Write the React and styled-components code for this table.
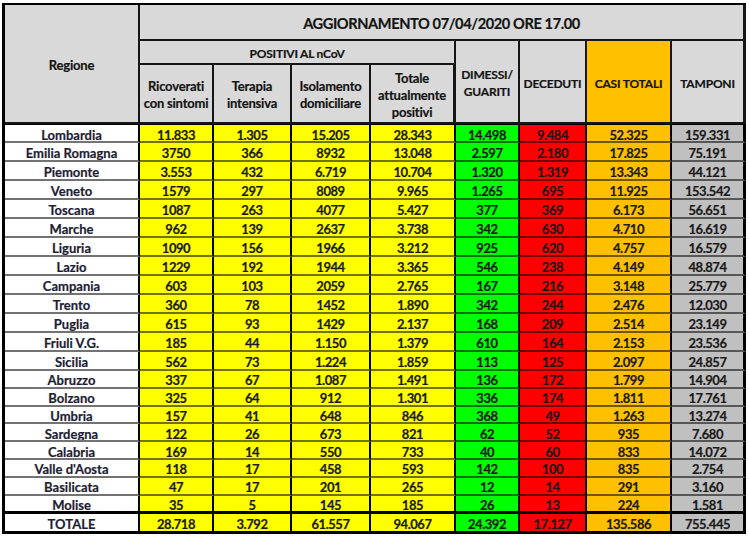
import React from 'react';
import styled, { createGlobalStyle } from 'styled-components';

const GlobalStyle = createGlobalStyle`
    html, body {
        margin: 0;
        padding: 0;
        background: #fff;
    }
    body {
        font-family: "Lato", "Open Sans", sans-serif;
    }
`

const colors = {
    head: '#d9d9d9',
    white: '#ffffff',
    yellow: '#ffff00',
    green: '#00ff00',
    red: '#ff0000',
    orange: '#ffc000',
    gray: '#c0c0c0',
}

const columnBg = ['white', 'yellow', 'yellow', 'yellow', 'yellow', 'green', 'red', 'orange', 'gray']
const columnWidths = [135, 74, 78, 79, 85, 64, 67, 85, 74]

const regions = [
    ['Lombardia', '11.833', '1.305', '15.205', '28.343', '14.498', '9.484', '52.325', '159.331'],
    ['Emilia Romagna', '3750', '366', '8932', '13.048', '2.597', '2.180', '17.825', '75.191'],
    ['Piemonte', '3.553', '432', '6.719', '10.704', '1.320', '1.319', '13.343', '44.121'],
    ['Veneto', '1579', '297', '8089', '9.965', '1.265', '695', '11.925', '153.542'],
    ['Toscana', '1087', '263', '4077', '5.427', '377', '369', '6.173', '56.651'],
    ['Marche', '962', '139', '2637', '3.738', '342', '630', '4.710', '16.619'],
    ['Liguria', '1090', '156', '1966', '3.212', '925', '620', '4.757', '16.579'],
    ['Lazio', '1229', '192', '1944', '3.365', '546', '238', '4.149', '48.874'],
    ['Campania', '603', '103', '2059', '2.765', '167', '216', '3.148', '25.779'],
    ['Trento', '360', '78', '1452', '1.890', '342', '244', '2.476', '12.030'],
    ['Puglia', '615', '93', '1429', '2.137', '168', '209', '2.514', '23.149'],
    ['Friuli V.G.', '185', '44', '1.150', '1.379', '610', '164', '2.153', '23.536'],
    ['Sicilia', '562', '73', '1.224', '1.859', '113', '125', '2.097', '24.857'],
    ['Abruzzo', '337', '67', '1.087', '1.491', '136', '172', '1.799', '14.904'],
    ['Bolzano', '325', '64', '912', '1.301', '336', '174', '1.811', '17.761'],
    ['Umbria', '157', '41', '648', '846', '368', '49', '1.263', '13.274'],
    ['Sardegna', '122', '26', '673', '821', '62', '52', '935', '7.680'],
    ['Calabria', '169', '14', '550', '733', '40', '60', '833', '14.072'],
    ["Valle d'Aosta", '118', '17', '458', '593', '142', '100', '835', '2.754'],
    ['Basilicata', '47', '17', '201', '265', '12', '14', '291', '3.160'],
    ['Molise', '35', '5', '145', '185', '26', '13', '224', '1.581'],
]

const totals = ['TOTALE', '28.718', '3.792', '61.557', '94.067', '24.392', '17.127', '135.586', '755.445']

// the lower rows of the sheet were captured slightly tighter
const COMPACT_FROM = 13

const Table = styled.table`
    border-collapse: separate;
    border-spacing: 0;
    table-layout: fixed;
    width: 744px;
    margin: 3px 0 0 2px;
    border-left: 3px solid #000;
    border-top: 2px solid #000;
    font-weight: 700;
    color: #1a1a1a;

    th, td {
        box-sizing: border-box;
        padding: 3px 0 0;
        text-align: center;
        vertical-align: middle;
        white-space: nowrap;
        overflow: hidden;
    }
    th:last-child, td:last-child {
        border-right-width: 3px;
    }
    tbody tr:first-child td {
        border-top: 1px solid #000;
    }
    tbody tr:last-child td {
        border-bottom: 3px solid #000;
    }
`

const HeadRow = styled.tr`
    height: ${({ $h }) => $h}px;
`

const HeadCell = styled.th`
    background: ${({ $bg }) => colors[$bg || 'head']};
    border-right: 2px solid #161616;
    border-bottom: 2px solid #161616;
    font-size: ${({ $size }) => $size || 13}px;
    line-height: 17px;
    letter-spacing: ${({ $size }) => ($size > 14 ? '-0.4px' : '-0.2px')};
    color: #141414;
    white-space: normal;
    -webkit-text-stroke: 0.2px currentColor;
`

const Row = styled.tr`
    height: ${({ $compact }) => ($compact ? '17.8px' : '19px')};
`

const Cell = styled.td`
    background: ${({ $bg }) => colors[$bg]};
    border-right: 2px solid #000;
    border-bottom: 2px solid rgba(0, 0, 0, 0.55);
    font-size: 13px;
    line-height: 11px;
    letter-spacing: ${({ $region }) => ($region ? '0' : '-0.45px')};
    color: ${({ $region }) => ($region ? '#1d1d34' : '#1a1a1a')};
    -webkit-text-stroke: 0.2px currentColor;

    && {
        padding-top: 4px;
    }
`

const TotalRow = styled.tr`
    height: 20px;
    td {
        border-bottom: 3px solid #000;
    }
`

const DataRow = ({ values, compact, as: RowTag = Row }) => (
    <RowTag $compact={compact}>
        {values.map((v, i) => (
            <Cell key={i} $bg={columnBg[i]} $region={i === 0}>{v}</Cell>
        ))}
    </RowTag>
)

const App = () => {
    return (
        <>
            <GlobalStyle />
            <Table>
                <colgroup>
                    {columnWidths.map((w, i) => <col key={i} style={{ width: w }} />)}
                </colgroup>
                <thead>
                    <HeadRow $h={36}>
                        <HeadCell rowSpan={3}>Regione</HeadCell>
                        <HeadCell colSpan={8} $size={14.6}>AGGIORNAMENTO 07/04/2020 ORE 17.00</HeadCell>
                    </HeadRow>
                    <HeadRow $h={24}>
                        <HeadCell colSpan={4} $size={12}>POSITIVI AL nCoV</HeadCell>
                        <HeadCell rowSpan={2} $size={12}>DIMESSI/<br />GUARITI</HeadCell>
                        <HeadCell rowSpan={2} $size={12}>DECEDUTI</HeadCell>
                        <HeadCell rowSpan={2} $size={12} $bg="orange">CASI TOTALI</HeadCell>
                        <HeadCell rowSpan={2} $size={12}>TAMPONI</HeadCell>
                    </HeadRow>
                    <HeadRow $h={59}>
                        <HeadCell>Ricoverati<br />con sintomi</HeadCell>
                        <HeadCell>Terapia<br />intensiva</HeadCell>
                        <HeadCell>Isolamento<br />domiciliare</HeadCell>
                        <HeadCell>Totale<br />attualmente<br />positivi</HeadCell>
                    </HeadRow>
                </thead>
                <tbody>
                    {regions.map((r, i) => (
                        <DataRow key={r[0]} values={r} compact={i >= COMPACT_FROM} />
                    ))}
                </tbody>
                <tfoot>
                    <DataRow values={totals} as={TotalRow} />
                </tfoot>
            </Table>
        </>
    )
}

export default App;
